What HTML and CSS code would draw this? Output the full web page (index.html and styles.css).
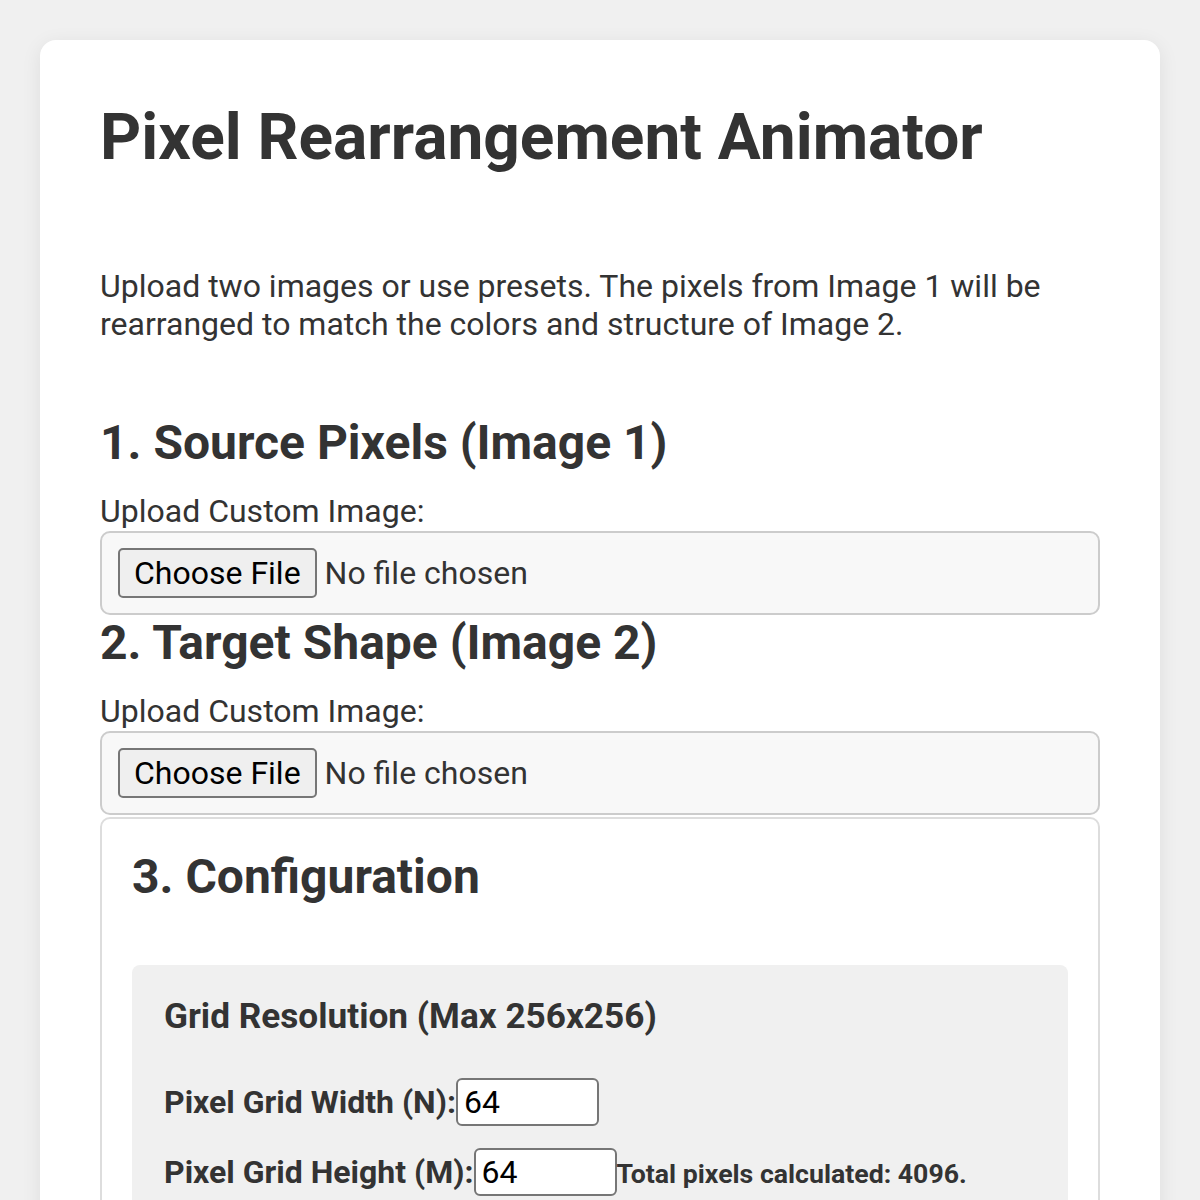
FILE: index.html
```html
<!DOCTYPE html>
<html lang="en">
<head>
    <meta charset="UTF-8">
    <meta name="viewport" content="width=device-width, initial-scale=1.0">
    <title>Pixel Rearrangement Animator</title>
    <link rel="stylesheet" href="styles.css">
</head>
<body>
    <div class="container">
        <h1 class="title">Pixel Rearrangement Animator</h1>
        <p class="intro">Upload two images or use presets. The pixels from Image 1 will be rearranged to match the colors and structure of Image 2.</p>

        <h2 class="section-title">1. Source Pixels (Image 1)</h2>
        <label class="upload-label" for="sourceFile">Upload Custom Image:</label>
        <div class="upload-box">
            <input type="file" id="sourceFile" accept="image/*">
        </div>

        <h2 class="section-title">2. Target Shape (Image 2)</h2>
        <label class="upload-label" for="targetFile">Upload Custom Image:</label>
        <div class="upload-box">
            <input type="file" id="targetFile" accept="image/*">
        </div>

        <div class="config">
            <h2 class="config-title">3. Configuration</h2>
            <div class="config-group">
                <h3 class="group-title">Grid Resolution (Max 256x256)</h3>
                <div class="field-row">
                    <label for="gridWidth">Pixel Grid Width (N):</label>
                    <input type="number" id="gridWidth" value="64" min="1" max="256">
                </div>
                <div class="field-row">
                    <label for="gridHeight">Pixel Grid Height (M):</label>
                    <input type="number" id="gridHeight" value="64" min="1" max="256">
                    <span class="total" id="totalPixels">Total pixels calculated: 4096.</span>
                </div>
            </div>
        </div>
    </div>
</body>
</html>
```

FILE: styles.css
```css
body {
    margin: 0;
    padding: 40px;
    background-color: #f0f0f0;
    font-family: Roboto, "Liberation Sans", sans-serif;
    font-size: 32px;
    color: #333;
}

.container {
    background-color: #fff;
    border-radius: 16px;
    padding: 60px;
    box-shadow: 0 4px 20px rgba(0, 0, 0, 0.08);
}

.title {
    font-size: 64px;
    margin: 0 0 92px 0;
    line-height: 75px;
}

.intro {
    margin: 0 0 72px 0;
    line-height: 38px;
}

.section-title {
    font-size: 48px;
    margin: 0 0 21px 0;
    line-height: 56px;
}

.upload-label {
    display: block;
    line-height: 38px;
    margin-bottom: 1px;
}

.upload-box {
    background-color: #f8f8f8;
    border: 2px solid #ccc;
    border-radius: 10px;
    padding: 15px 16px;
}

.upload-box input[type="file"] {
    font-family: inherit;
    font-size: 32px;
    color: #333;
}

.upload-box input[type="file"]::file-selector-button {
    font-family: inherit;
    font-size: 32px;
    color: #000;
    height: 50px;
    padding: 0 14px;
    margin-right: 8px;
    background-color: #efefef;
    border: 2px solid #767676;
    border-radius: 5px;
}

.config {
    margin-top: 2px;
    border: 2px solid #ddd;
    border-radius: 10px;
    padding: 30px 30px;
}

.config-title {
    font-size: 48px;
    line-height: 56px;
    margin: 0 0 60px 0;
}

.config-group {
    background-color: #f0f0f0;
    border-radius: 8px;
    padding: 29px 32px 30px 32px;
}

.group-title {
    font-size: 35.2px;
    line-height: 44px;
    margin: 0 0 40px 0;
}

.field-row {
    display: flex;
    align-items: baseline;
    margin-bottom: 22px;
}

.field-row label {
    font-weight: bold;
}

.field-row input {
    font-family: inherit;
    font-size: 32px;
    width: 143px;
    height: 48px;
    box-sizing: border-box;
    border: 2px solid #767676;
    border-radius: 6px;
    padding: 0 6px;
    color: #000;
}

.total {
    font-size: 26.67px;
    font-weight: bold;
}
```
